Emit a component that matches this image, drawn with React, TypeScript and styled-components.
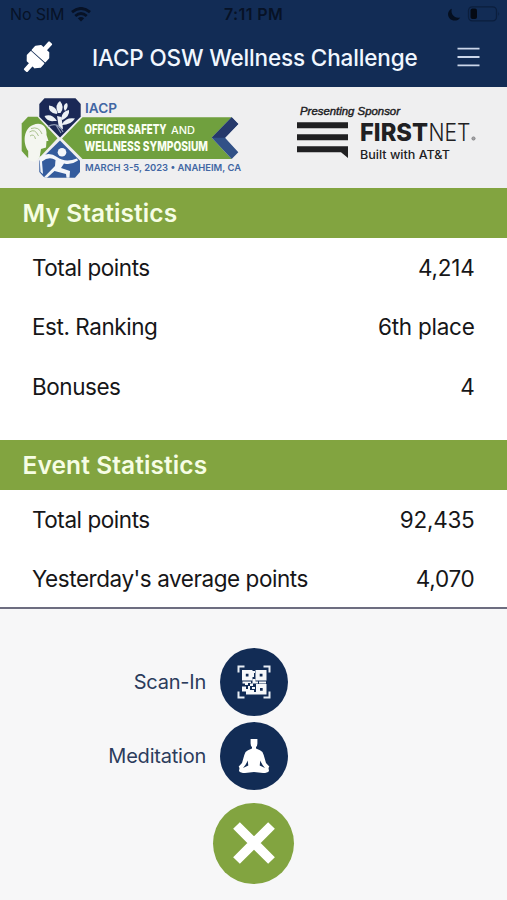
import React from "react";
import styled, { createGlobalStyle } from "styled-components";

const navy = "#122c55";
const green = "#82a440";

const GlobalStyle = createGlobalStyle`
  * { box-sizing: border-box; }
  body { margin: 0; background: #f7f7f7; }
`;

const Screen = styled.div`
  width: 507px;
  height: 900px;
  display: flex;
  flex-direction: column;
  overflow: hidden;
  background: #f7f7f8;
  color: #161618;
  font-family: Inter, "Liberation Sans", sans-serif;
`;

const Header = styled.header`
  height: 87px;
  flex: none;
  background: ${navy};
  display: flex;
  flex-direction: column;
`;

const StatusBar = styled.div`
  height: 29px;
  padding: 0 6px 0 10px;
  display: grid;
  grid-template-columns: 214px 1fr 54px;
  align-items: center;
  color: #071226;
  font-size: 16px;
  line-height: 29px;
`;

const Carrier = styled.div`
  display: flex;
  align-items: center;
  gap: 7px;
  letter-spacing: -0.15px;
`;

const Clock = styled.div`
  font-weight: 600;
  font-size: 16px;
  letter-spacing: 0.4px;
`;

const StatusIcons = styled.div`
  display: flex;
  justify-content: flex-end;
  padding-bottom: 2px;
`;

const TitleBar = styled.div`
  height: 56px;
  display: flex;
  align-items: center;
  padding: 0 27.5px 0 21px;
`;

const Title = styled.h1`
  margin: 2px 0 0 37px;
  flex: 1;
  color: #f1f7ff;
  font-size: 22.5px;
  font-weight: 550;
  line-height: 30px;
  letter-spacing: -0.15px;
  white-space: nowrap;
`;

const Sponsors = styled.div`
  height: 101px;
  flex: none;
  background: #efeff0;
  display: flex;
  align-items: flex-start;
  justify-content: space-between;
  padding: 7px 27px 0 18px;
`;

const FirstNetSlot = styled.div`
  padding-top: 7px;
`;

const SectionTitle = styled.h2`
  margin: 0;
  height: 50px;
  flex: none;
  padding-left: 22.5px;
  background: ${green};
  color: #f6fde4;
  font-size: 24.5px;
  font-weight: 600;
  letter-spacing: 0.1px;
  line-height: 51px;
`;

const StatList = styled.dl<{ $height: number }>`
  margin: 0;
  height: ${(p) => p.$height}px;
  flex: none;
  background: #fff;
`;

const StatRow = styled.div`
  height: 59.3px;
  padding: 1px 32.5px 0 32px;
  display: flex;
  align-items: center;
  justify-content: space-between;
  font-size: 22.5px;
  line-height: 30px;
`;

const StatLabel = styled.dt`
  letter-spacing: -0.45px;
`;

const StatValue = styled.dd`
  margin: 0;
  letter-spacing: -0.25px;
`;

const Actions = styled.footer`
  flex: 1;
  border-top: 2px solid #6d6d80;
  padding-top: 39px;
  display: flex;
  flex-direction: column;
  align-items: center;
`;

const ActionRow = styled.div`
  width: 100%;
  height: 74.3px;
  padding-right: 219px;
  display: flex;
  align-items: flex-start;
  justify-content: flex-end;
  gap: 14px;
`;

const ActionLabel = styled.span`
  color: #2c3c5c;
  font-size: 20px;
  letter-spacing: -0.22px;
  line-height: 69px;
`;

const RoundButton = styled.button<{ $size: number; $color: string }>`
  width: ${(p) => p.$size}px;
  height: ${(p) => p.$size}px;
  padding: 0;
  border: 0;
  border-radius: 50%;
  background: ${(p) => p.$color};
  display: flex;
  align-items: center;
  justify-content: center;
`;

const CloseWrap = styled.div`
  padding-top: 6.4px;
`;

const WifiIcon = () => (
  <svg width="20" height="15" viewBox="0 0 20 15">
    <g fill="none" stroke="#071226" strokeWidth="2.9">
      <path d="M1 5.2Q10-2.3 19 5.2" />
      <path d="M4.3 9Q10 4.2 15.7 9" />
    </g>
    <path d="M6.8 11.2Q10 8.6 13.2 11.2L10 14.6Z" fill="#071226" />
  </svg>
);

const PhoneStateIcon = () => (
  <svg width="54" height="18" viewBox="0 0 54 18">
    <path d="M4.8 3.8C.3 5.7 .2 10.900 2.700 13.500C5.700 16.700 11 16.200 13.200 12.400C7.800 13.900 3.300 9.400 4.800 3.800Z" fill="#050f20" />
    <rect x="21.500" y="1.800" width="28" height="14" rx="3.800" fill="none" stroke="#0b1e3d" strokeWidth="1.300" />
    <rect x="23.500" y="3.500" width="6.500" height="10.500" rx="2" fill="#050a14" />
    <path d="M51.300 6.500Q53 8.800 51.300 11Z" fill="#0b1e3d" />
  </svg>
);

const PlugIcon = () => (
  <svg width="34" height="34" viewBox="0 0 34 34">
    <g transform="translate(17 16.700) rotate(-48)" fill="#fff" stroke="#fff" strokeLinejoin="round">
      <path d="M-18-1.300H-9V1.300H-18ZM9-1.300H18V1.300H9Z" strokeWidth="2.200" />
      <path d="M-1.300-8.500V8.500H-6L-10 5V-5L-6-8.500ZM1.300-8.500V8.500H6L10 5V-5L6-8.500Z" strokeWidth="1.800" />
    </g>
  </svg>
);

const MenuIcon = () => (
  <svg width="23" height="20" viewBox="0 0 23 20">
    <path d="M.5 1.700H22.500M.5 10H22.500M.5 18.300H22.500" stroke="#cbd6ea" strokeWidth="1.800" />
  </svg>
);

const SymposiumLogo = () => (
  <svg width="228" height="88" viewBox="18 94 228 88" fontFamily="Inter, sans-serif">
    <path d="M44.500 98.300H75.500L80.700 104V116.700L60 137.600L39.300 116.700V104Z" fill="#1b2856" />
    <path d="M60 140.600L80 160.700V172L75 177.700H44.500L39.300 172V160.700Z" fill="#345c9d" />
    <path d="M28 116.800H37.500L57.500 138.300L38.500 158.500L28 158L21.700 151V123.500Z" fill="#70a03e" />
    <path d="M82.500 117.300H231.700L211.700 137.700L231.700 159H82.500L62 138.500Z" fill="#70a03e" />
    <path d="M231.700 117.300L238.300 124L225 137.700L238.300 152.300L231.700 159L211.700 137.700Z" fill="#315187" />
    <path d="M231.700 117.300L238.300 124L225 137.700H211.700Z" fill="#26396b" />
    <path
      d="M28.200 160V151C22.500 143 23.500 128.500 33 125C41 121.500 47.300 126 46.500 135L48.500 141H46.500L46 147.500L41 149L39.500 158L35 162Z"
      fill="#f4f6f0"
    />
    <path d="M29.500 132Q35 128 38.500 136M30 136Q34 133 35.500 139M31 128.500Q39 126 42 134" fill="none" stroke="#a9c18c" strokeWidth="1" />
    <g fill="#edf1f5">
      <path d="M58 113Q54 105 60 101Q65 107 60.500 113Z" />
      <path d="M56.500 114Q48 113 49 105.500Q56 106 57.500 113Z" />
      <path d="M54 121Q47 122 44.500 116Q52 113 57 121Z" />
      <path d="M61 119Q62 111 69 110Q70 116 62.500 120Z" />
      <path d="M62 124Q66 117 75 118.500Q71 125 62 125Z" />
      <path d="M57 116L59 128L63 129L61.500 117Z" />
      <path d="M64 109Q63 104 67 103Q69 107 65 111Z" />
    </g>
    <path d="M48 126.500Q58 121 63 132M56 125L61 133" fill="none" stroke="#8e9bb6" strokeWidth="1.200" />
    <circle cx="62" cy="152.300" r="4.300" fill="#f3f6fa" />
    <path
      d="M39.500 157Q49 151 57 157Q65 163 77 158.500L78 160.500Q71 165.500 64 163.500L61 168L70 171L69.500 177.700H66.500L66 174L54.500 171L47 177.700H43.500L55 166L55.500 160Q49 156 42 161.500L43 174L40.500 172Z"
      fill="#f3f6fa"
    />
    <g fill="#4166a3" fontWeight="600">
      <text x="85" y="113" fontSize="13.500" textLength="32" lengthAdjust="spacingAndGlyphs">IACP</text>
      <text x="85" y="171.300" fontSize="9.600" textLength="156" lengthAdjust="spacingAndGlyphs">MARCH 3-5, 2023 • ANAHEIM, CA</text>
    </g>
    <g fill="#fbfff3">
      <g transform="scale(1 1.36)" fontSize="10" fontWeight="800">
        <text x="84.500" y="98.900" textLength="82" lengthAdjust="spacingAndGlyphs">OFFICER SAFETY</text>
        <text x="84.500" y="110.900" textLength="123.500" lengthAdjust="spacingAndGlyphs">WELLNESS SYMPOSIUM</text>
      </g>
      <text x="171" y="133.700" fontSize="10.500" fontWeight="500" textLength="24" lengthAdjust="spacingAndGlyphs">AND</text>
    </g>
  </svg>
);

const FirstNetLogo = () => (
  <svg width="186" height="64" viewBox="294 101 186 64" fill="#202022" fontFamily="Inter, sans-serif">
    <text x="300" y="114.600" fontSize="10.500" fontStyle="italic" fontFamily="Liberation Sans, sans-serif" stroke="#202022" strokeWidth=".4" textLength="100" lengthAdjust="spacingAndGlyphs">Presenting Sponsor</text>
    <path d="M297 122.300H348V128.300H297ZM297 134.300H348V140.300H297ZM297 146.300H348V158L341 152.300H297Z" />
    <text x="360" y="140.700" fontSize="24.800" fontWeight="800" textLength="68" lengthAdjust="spacingAndGlyphs">FIRST</text>
    <text x="428.500" y="140.700" fontSize="24.800" fontWeight="300" textLength="42" lengthAdjust="spacingAndGlyphs">NET</text>
    <circle cx="473.500" cy="138.500" r="1.600" fill="#a5a5a7" stroke="#77777a" strokeWidth=".8" />
    <text x="360" y="158.500" fontSize="11.500" fontWeight="550" textLength="90" lengthAdjust="spacingAndGlyphs">Built with AT&amp;T</text>
  </svg>
);

const ScanIcon = () => (
  <svg width="34" height="34" viewBox="0 0 34 34">
    <path d="M1.500 7.500V1.500H7.500M26.500 1.500H32.500V7.500M32.500 26.500V32.500H26.500M7.500 32.500H1.500V26.500" fill="none" stroke="#e8eef5" strokeWidth="2" />
    <path
      fillRule="evenodd"
      fill="#f6f8fa"
      d="M5 5H15.500V15.500H5ZM8.800 8.800V11.500H11.500V8.800ZM18.500 5H29.500V15.500H18.500ZM22.700 8.800V11.500H25.500V8.800ZM19 19H29.500V29.500H19ZM23 23V25.700H25.700V23Z"
    />
    <path fill="#f6f8fa" d="M15 6H18V8H17V12H15ZM5.500 16.500H14V18H11V20H8V18.500H5.500ZM15.500 14H18.500V16.500H21V18.500H16V21H13V18.500H15.500ZM22 16.500H29V18.500H22ZM5 21.500H9V24H11V21H13V25H17V27H19V29.500H9V26.500H5ZM15 22H18V24H15Z" />
  </svg>
);

const MeditationIcon = () => (
  <svg width="34" height="36" viewBox="0 0 34 36">
    <path
      fill="#fff"
      d="M13.600 1H20.400V5.500Q20.400 8 19 9V10.500L23 12.200Q26 13.500 26.700 17L29 25L32.300 28.500L31.500 30L32 33Q30.500 35 26 35L17 34L8 35Q3.500 35 2 33L2.500 30L1.700 28.500L5 25L7.300 17Q8 13.500 11 12.200L15 10.500V9Q13.600 8 13.600 5.500Z"
    />
    <path d="M10.700 22.500L11.300 27.500L6 30Q9 27 10.700 22.500ZM23.300 22.500L22.700 27.500L28 30Q25 27 23.300 22.500Z" fill={navy} />
  </svg>
);

const CloseIcon = () => (
  <svg width="44" height="44" viewBox="0 0 44 44">
    <path d="M4.500 4.500L39.500 39.500M39.500 4.500L4.500 39.500" stroke="#fff" strokeWidth="9.500" />
  </svg>
);

const myStats = [
  ["Total points", "4,214"],
  ["Est. Ranking", "6th place"],
  ["Bonuses", "4"],
];

const eventStats = [
  ["Total points", "92,435"],
  ["Yesterday's average points", "4,070"],
];

const Stats = ({ rows, height }: { rows: string[][]; height: number }) => (
  <StatList $height={height}>
    {rows.map(([label, value]) => (
      <StatRow key={label}>
        <StatLabel>{label}</StatLabel>
        <StatValue>{value}</StatValue>
      </StatRow>
    ))}
  </StatList>
);

export default function App() {
  return (
    <Screen>
      <GlobalStyle />
      <Header>
        <StatusBar>
          <Carrier>
            No SIM <WifiIcon />
          </Carrier>
          <Clock>7:11 PM</Clock>
          <StatusIcons>
            <PhoneStateIcon />
          </StatusIcons>
        </StatusBar>
        <TitleBar>
          <PlugIcon />
          <Title>IACP OSW Wellness Challenge</Title>
          <MenuIcon />
        </TitleBar>
      </Header>
      <Sponsors>
        <SymposiumLogo />
        <FirstNetSlot>
          <FirstNetLogo />
        </FirstNetSlot>
      </Sponsors>
      <SectionTitle>My Statistics</SectionTitle>
      <Stats rows={myStats} height={202} />
      <SectionTitle>Event Statistics</SectionTitle>
      <Stats rows={eventStats} height={117} />
      <Actions>
        <ActionRow>
          <ActionLabel>Scan-In</ActionLabel>
          <RoundButton $size={68} $color={navy} aria-label="Scan-In">
            <ScanIcon />
          </RoundButton>
        </ActionRow>
        <ActionRow>
          <ActionLabel>Meditation</ActionLabel>
          <RoundButton $size={68} $color={navy} aria-label="Meditation">
            <MeditationIcon />
          </RoundButton>
        </ActionRow>
        <CloseWrap>
          <RoundButton $size={81} $color={green} aria-label="Close">
            <CloseIcon />
          </RoundButton>
        </CloseWrap>
      </Actions>
    </Screen>
  );
}
